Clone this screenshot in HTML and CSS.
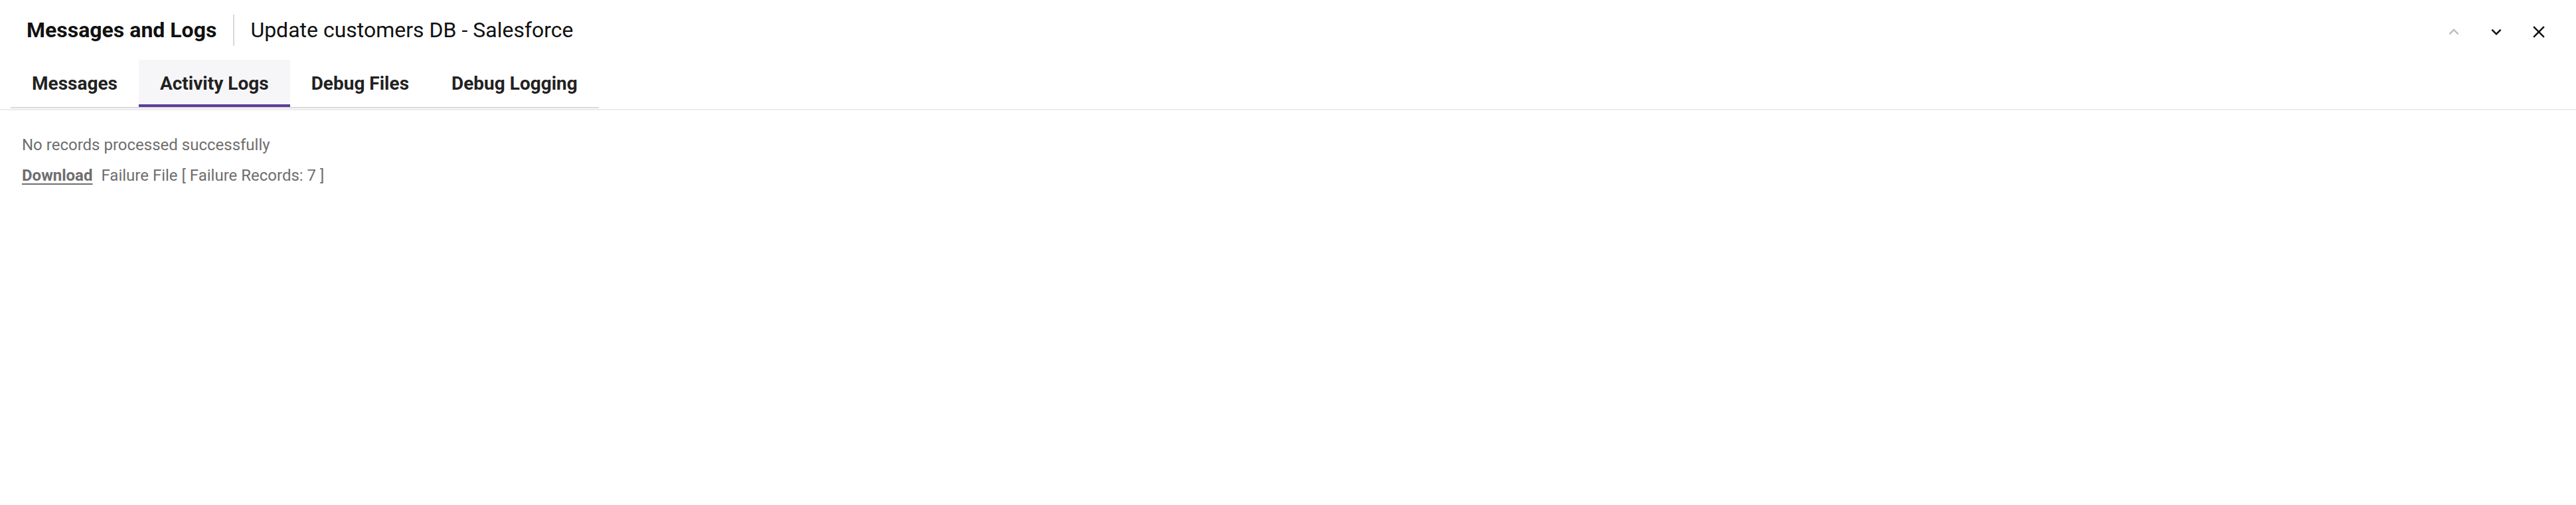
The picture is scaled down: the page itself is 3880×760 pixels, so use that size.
FILE: index.html
```html
<!DOCTYPE html>
<html lang="en">
<head>
    <meta charset="UTF-8">
    <meta name="viewport" content="width=device-width, initial-scale=1.0">
    <title>Messages and Logs</title>
    <link rel="stylesheet" href="styles.css">
</head>
<body>
    <div class="header">
        <h1 class="title">Messages and Logs</h1>
        <div class="divider"></div>
        <div class="subtitle">Update customers DB - Salesforce</div>

        <div class="actions">
            <button class="icon-btn disabled" title="Previous">
                <svg viewBox="0 0 24 24" width="30" height="30"><path d="M12 8l-6 6 1.41 1.41L12 10.83l4.59 4.58L18 14z"/></svg>
            </button>
            <button class="icon-btn" title="Next">
                <svg viewBox="0 0 24 24" width="30" height="30"><path d="M16.59 8.59L12 13.17 7.41 8.59 6 10l6 6 6-6z"/></svg>
            </button>
            <button class="icon-btn" title="Close">
                <svg viewBox="0 0 24 24" width="30" height="30"><path d="M19 6.41L17.59 5 12 10.59 6.41 5 5 6.41 10.59 12 5 17.59 6.41 19 12 13.41 17.59 19 19 17.59 13.41 12z"/></svg>
            </button>
        </div>
    </div>

    <div class="tabs-bar">
        <div class="tabs">
            <div class="tab">Messages</div>
            <div class="tab active">Activity Logs</div>
            <div class="tab">Debug Files</div>
            <div class="tab">Debug Logging</div>
        </div>
    </div>

    <div class="content">
        <p class="log-line">No records processed successfully</p>
        <p class="log-line">
            <a class="download" href="#">Download</a><span class="file-info">Failure File [ Failure Records: 7 ]</span>
        </p>
    </div>
</body>
</html>
```

FILE: styles.css
```css
body {
    margin: 0;
    padding: 0;
    background-color: #FFFFFF;
    font-family: Roboto, 'Liberation Sans', sans-serif;
    color: #111;
}

.header {
    display: flex;
    align-items: center;
    height: 47px;
    padding: 22px 32px 0 40px;
}

.title {
    margin: 0 25px 0 0;
    font-size: 32px;
    font-weight: 700;
    line-height: 47px;
    color: #111;
}

.divider {
    width: 2px;
    height: 47px;
    background-color: #d8d8d8;
    margin-right: 24px;
}

.subtitle {
    font-size: 32px;
    font-weight: 400;
    line-height: 47px;
    color: #111;
}

.actions {
    display: flex;
    gap: 16px;
    margin-left: auto;
    padding-top: 4px;
}

.icon-btn {
    width: 48px;
    height: 48px;
    padding: 0;
    border: none;
    background: none;
    display: flex;
    justify-content: center;
    align-items: center;
    cursor: pointer;
}

.icon-btn svg {
    fill: #111;
}

.icon-btn.disabled svg {
    fill: #bdbdbd;
}

.tabs-bar {
    margin-top: 21px;
    padding-bottom: 1px;
    border-bottom: 2px solid #ececec;
}

.tabs {
    display: inline-flex;
    margin-left: 16px;
    border-bottom: 2px solid #dadadd;
}

.tab {
    padding: 4px 32px 0;
    line-height: 63px;
    font-size: 28px;
    font-weight: 700;
    color: #222;
    border-bottom: 4px solid transparent;
    cursor: pointer;
}

.tab.active {
    background-color: #f6f6f8;
    border-bottom-color: #5b3a9b;
}

.content {
    padding: 34px 33px 0;
}

.log-line {
    margin: 0 0 10px;
    font-size: 24px;
    line-height: 36px;
    color: #6e6e6e;
}

.download {
    font-weight: 700;
    color: #6e6e6e;
    text-decoration: underline;
    text-decoration-thickness: 2px;
    text-underline-offset: 4px;
    margin-right: 13px;
}
```
